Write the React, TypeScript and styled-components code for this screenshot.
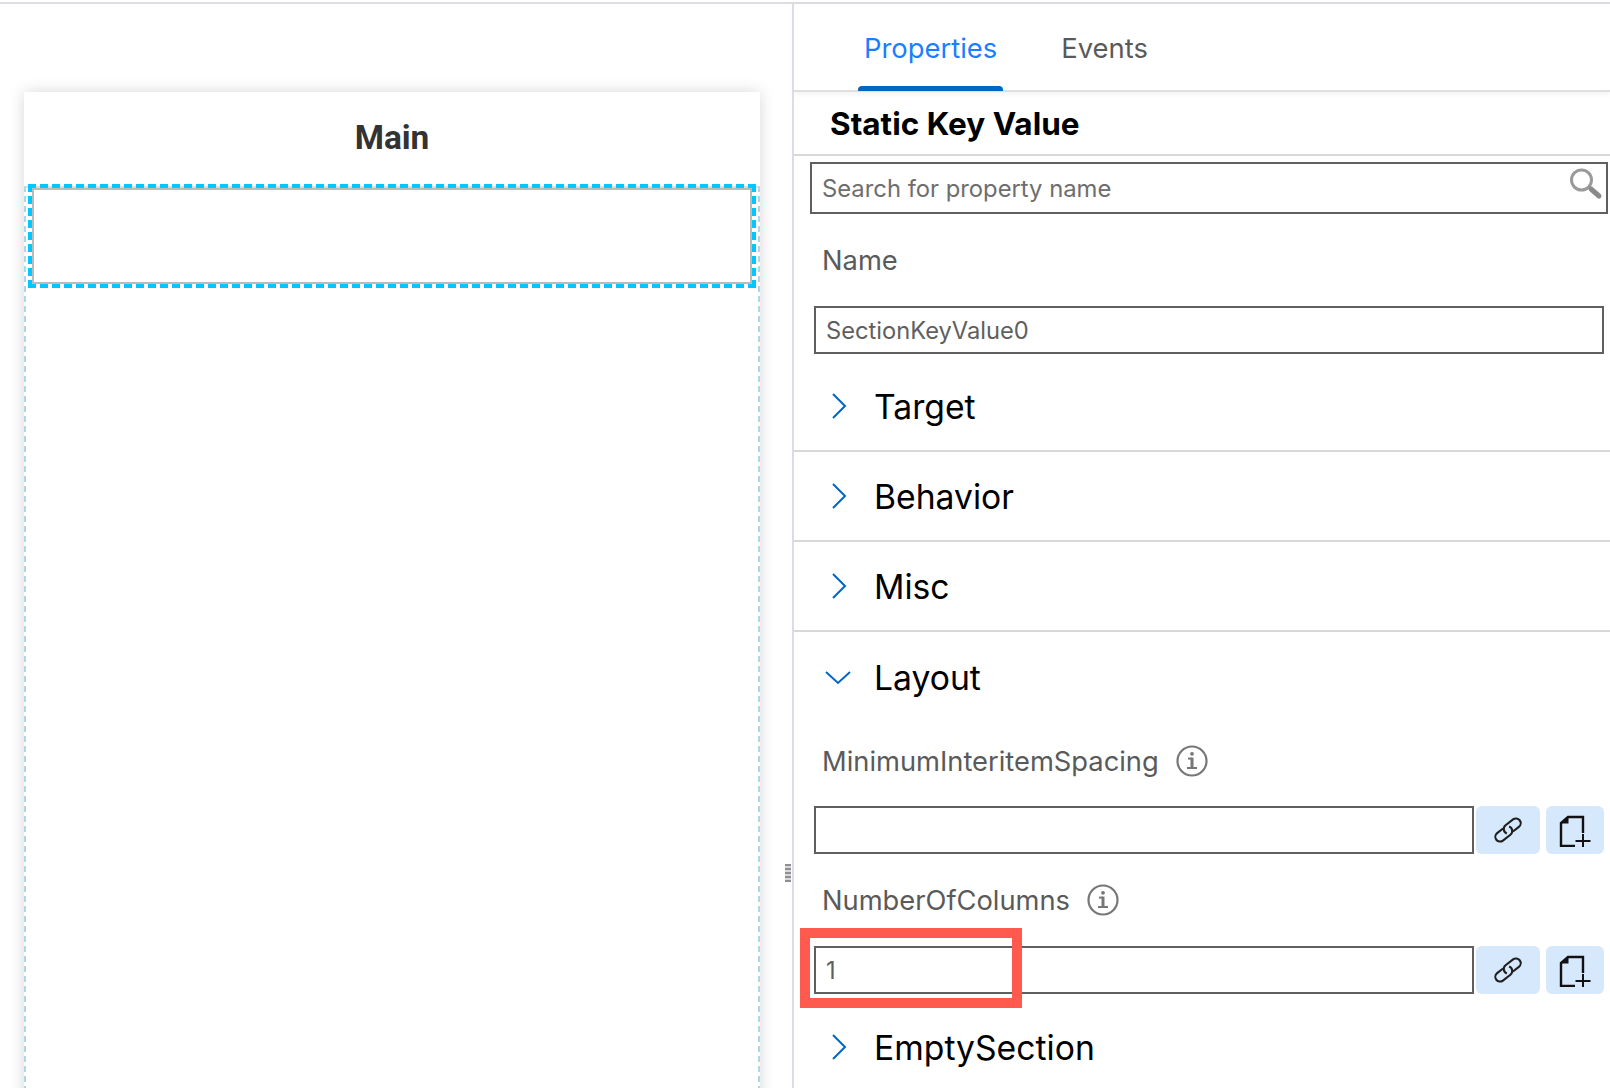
import React from "react";
import styled, { createGlobalStyle } from "styled-components";

const GlobalStyle = createGlobalStyle`
  html, body { margin: 0; padding: 0; background: #fff; overflow: hidden; }
  * { box-sizing: border-box; }
`;

const Page = styled.div`
  position: relative;
  width: 1610px;
  height: 1088px;
  padding-top: 2px;
  overflow: hidden;
  font-family: Inter, "Liberation Sans", sans-serif;
`;
const TopRule = styled.div`
  height: 2px;
  background: #dcdce4;
`;
const Workspace = styled.div`
  display: flex;
  height: 1084px;
`;
const CanvasPane = styled.div`
  position: relative;
  width: 794px;
  flex: none;
  padding: 88px 32px 0 24px;
  border-right: 2px solid #dcdce4;
  overflow: hidden;
`;
const Grip = styled.div`
  position: absolute;
  left: 785px;
  top: 860px;
  width: 6px;
  height: 18px;
  background: repeating-linear-gradient(to bottom, #8f8f8f 0 2px, #d8d8d8 2px 4px);
`;
const Card = styled.div`
  height: 1100px;
  background: #fff;
  box-shadow: 0 0 14px rgba(0, 0, 0, 0.16);
  display: flex;
  flex-direction: column;
`;
const CardTitle = styled.div`
  height: 94px;
  flex: none;
  display: flex;
  align-items: center;
  justify-content: center;
  padding-bottom: 4px;
  font-family: Roboto, sans-serif;
  font-weight: 700;
  font-size: 33.4px;
  color: #333;
`;
const CardBody = styled.div`
  flex: 1;
  padding: 0 2px;
  border-top: 2px solid #dcdcdc;
  border-left: 2px dashed #add8e6;
  border-right: 2px dashed #add8e6;
`;
const SelectedSection = styled.div`
  margin-top: -4px;
  height: 104px;
  border: 4px dashed #00c8ff;
`;
const SelectedInner = styled.div`
  height: 100%;
  background: #fff;
  border: 2px solid #bbb;
`;

const Inspector = styled.div`
  flex: 1;
  min-width: 0;
`;
const TabBar = styled.div`
  display: flex;
  height: 88px;
  padding-left: 64px;
  border-bottom: 2px solid #dfdfdf;
  box-shadow: 0 2px 6px rgba(0, 0, 0, 0.06);
`;
const Tab = styled.div<{ $active?: boolean }>`
  position: relative;
  height: 87px;
  padding: 0 6px;
  margin-right: 52px;
  display: flex;
  align-items: center;
  font-size: 27.4px;
  color: ${(p) => (p.$active ? "#1a7fff" : "#5a5a5a")};
  &::after {
    content: "";
    display: ${(p) => (p.$active ? "block" : "none")};
    position: absolute;
    left: 0;
    right: 0;
    bottom: 0;
    height: 5px;
    border-radius: 4px 4px 0 0;
    background: #0066c4;
  }
`;
const ControlTitle = styled.div`
  height: 64px;
  padding-left: 36px;
  display: flex;
  align-items: center;
  border-bottom: 2px solid #d8d8d8;
  font-size: 31.5px;
  font-weight: 700;
  color: #000;
`;
const SearchBox = styled.div`
  margin: 6px 2px 0 16px;
  height: 52px;
  padding: 0 10px;
  border: 2px solid #5f5f5f;
  display: flex;
  align-items: center;
  justify-content: space-between;
  font-size: 23.8px;
  color: #6e6e6e;
`;
const SearchIcon = styled.svg`
  width: 36px;
  height: 36px;
  margin: -8px -8px 0 0;
`;
const FieldLabel = styled.div<{ $height: number; $lift?: number }>`
  height: ${(p) => p.$height}px;
  padding: 0 0 ${(p) => p.$lift ?? 0}px 28px;
  display: flex;
  align-items: center;
  gap: 16px;
  font-size: 27.3px;
  color: #5a5a5a;
`;
const InfoIcon = styled.svg`
  width: 34px;
  height: 34px;
  flex: none;
`;
const FieldRow = styled.div`
  margin: 0 6px 0 20px;
  display: flex;
  gap: 2px;
`;
const TextField = styled.div`
  flex: 1;
  height: 48px;
  padding: 0 10px;
  border: 2px solid #5f5f5f;
  display: flex;
  align-items: center;
  font-size: 23.7px;
  color: #5f5f5f;
`;
const IconButton = styled.div<{ $width: number; $gap?: number }>`
  width: ${(p) => p.$width}px;
  height: 48px;
  margin-left: ${(p) => p.$gap ?? 0}px;
  flex: none;
  display: flex;
  align-items: center;
  justify-content: center;
  border-radius: 6px;
  background: #d6e8fc;
`;
const GroupRow = styled.div<{ $divider?: boolean; $top?: number }>`
  height: 90px;
  margin-top: ${(p) => p.$top ?? 0}px;
  padding-left: 28px;
  display: flex;
  align-items: center;
  border-bottom: ${(p) => (p.$divider ? "2px solid #d8d8d8" : "none")};
  font-size: 33.7px;
  color: #000;
`;
const ChevronSlot = styled.svg`
  width: 32px;
  height: 32px;
  flex: none;
  margin-right: 20px;
`;
const Annotation = styled.div`
  position: absolute;
  left: 800px;
  top: 928px;
  width: 222px;
  height: 80px;
  border: 10px solid #ff5a4d;
`;

const Chevron = ({ open }: { open?: boolean }) => (
  <ChevronSlot viewBox="0 0 32 32" fill="none" stroke="#0066c4" strokeWidth="2">
    <path d={open ? "M4 11 L16 22 L28 11" : "M11 4 L23 16 L11 28"} />
  </ChevronSlot>
);

const Info = () => (
  <InfoIcon viewBox="0 0 34 34" fill="none" stroke="#777">
    <circle cx="17" cy="17" r="14.5" strokeWidth="2.2" />
    <circle cx="17" cy="9.8" r="1.9" fill="#777" stroke="none" />
    <path d="M13 14.6h4" strokeWidth="2" />
    <path d="M17 13.6v10" strokeWidth="3" />
    <path d="M12 24h10" strokeWidth="2" />
  </InfoIcon>
);

const LinkIcon = () => (
  <svg width="32" height="32" viewBox="0 0 32 32" fill="none" stroke="#1f1f1f" strokeWidth="2.1">
    <g transform="translate(16 16) rotate(-38)">
      <path d="M3 4.2H10.5A4.7 4.7 0 0 0 10.5 -5.2H1A4.7 4.7 0 0 0 -3 2" />
      <path d="M-3 -4.2H-10.5A4.7 4.7 0 0 0 -10.5 5.2H-1A4.7 4.7 0 0 0 3 -2" />
    </g>
  </svg>
);

const NewFileIcon = () => (
  <svg width="32" height="34" viewBox="0 0 32 34" fill="none" stroke="#111" strokeWidth="2.4">
    <path d="M16 33H2V10L9 4H24V20" />
    <path d="M1 10.5H9.5V3Z" fill="#111" stroke="none" />
    <path d="M24 21V34M16.5 28H31.5" strokeWidth="2" />
  </svg>
);

const Actions = () => (
  <>
    <IconButton $width={64}>
      <LinkIcon />
    </IconButton>
    <IconButton $width={58} $gap={4}>
      <NewFileIcon />
    </IconButton>
  </>
);

export default function App() {
  return (
    <Page>
      <GlobalStyle />
      <TopRule />
      <Workspace>
        <CanvasPane>
          <Card>
            <CardTitle>Main</CardTitle>
            <CardBody>
              <SelectedSection>
                <SelectedInner />
              </SelectedSection>
            </CardBody>
          </Card>
          <Grip />
        </CanvasPane>
        <Inspector>
          <TabBar>
            <Tab $active>Properties</Tab>
            <Tab>Events</Tab>
          </TabBar>
          <ControlTitle>Static Key Value</ControlTitle>
          <SearchBox>
            Search for property name
            <SearchIcon viewBox="0 0 36 36" fill="none">
              <circle cx="13.5" cy="14" r="10" stroke="#9a9a9a" strokeWidth="3" />
              <path d="M23 23 L31 30" stroke="#8a8a8a" strokeWidth="5" strokeLinecap="round" />
            </SearchIcon>
          </SearchBox>
          <FieldLabel $height={92}>Name</FieldLabel>
          <FieldRow>
            <TextField>SectionKeyValue0</TextField>
          </FieldRow>
          <GroupRow $divider $top={8}>
            <Chevron />
            Target
          </GroupRow>
          <GroupRow $divider>
            <Chevron />
            Behavior
          </GroupRow>
          <GroupRow $divider>
            <Chevron />
            Misc
          </GroupRow>
          <GroupRow>
            <Chevron open />
            Layout
          </GroupRow>
          <FieldLabel $height={84} $lift={6}>
            MinimumInteritemSpacing
            <Info />
          </FieldLabel>
          <FieldRow>
            <TextField />
            <Actions />
          </FieldRow>
          <FieldLabel $height={92}>
            NumberOfColumns
            <Info />
          </FieldLabel>
          <FieldRow>
            <TextField>1</TextField>
            <Actions />
          </FieldRow>
          <GroupRow $top={8}>
            <Chevron />
            EmptySection
          </GroupRow>
        </Inspector>
      </Workspace>
      <Annotation />
    </Page>
  );
}
